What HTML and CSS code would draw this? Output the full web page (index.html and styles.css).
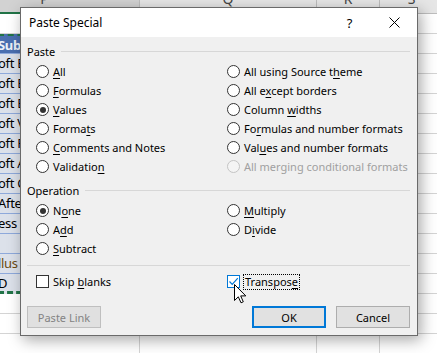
FILE: index.html
```html
<!DOCTYPE html>
<html lang="en">
<head>
  <meta charset="UTF-8" />
  <title>Paste Special</title>
  <link rel="stylesheet" href="styles.css">
</head>
<body>
  <div class="sheet">
    <div class="row head">
      <div class="cell active"><span>P</span></div>
      <div class="cell"><span>Q</span></div>
      <div class="cell"><span>R</span></div>
      <div class="cell"><span>S</span></div>
    </div>
    <div class="row"><div class="cell"></div><div class="cell"></div><div class="cell"></div><div class="cell"></div></div>
    <div class="row"><div class="cell data title-cell first">Sub</div><div class="cell"></div><div class="cell"></div><div class="cell"></div></div>
    <div class="row"><div class="cell data">oft E</div><div class="cell"></div><div class="cell"></div><div class="cell"></div></div>
    <div class="row"><div class="cell data">oft E</div><div class="cell"></div><div class="cell"></div><div class="cell"></div></div>
    <div class="row"><div class="cell data">oft E</div><div class="cell"></div><div class="cell"></div><div class="cell"></div></div>
    <div class="row"><div class="cell data">oft V</div><div class="cell"></div><div class="cell"></div><div class="cell"></div></div>
    <div class="row"><div class="cell data">oft P</div><div class="cell"></div><div class="cell"></div><div class="cell"></div></div>
    <div class="row"><div class="cell data">oft A</div><div class="cell"></div><div class="cell"></div><div class="cell"></div></div>
    <div class="row"><div class="cell data">oft C</div><div class="cell"></div><div class="cell"></div><div class="cell"></div></div>
    <div class="row"><div class="cell data">After</div><div class="cell"></div><div class="cell"></div><div class="cell"></div></div>
    <div class="row"><div class="cell data">ess</div><div class="cell"></div><div class="cell"></div><div class="cell"></div></div>
    <div class="row"><div class="cell data"></div><div class="cell"></div><div class="cell"></div><div class="cell"></div></div>
    <div class="row"><div class="cell data accent">llus</div><div class="cell"></div><div class="cell"></div><div class="cell"></div></div>
    <div class="row"><div class="cell data last">D</div><div class="cell"></div><div class="cell"></div><div class="cell"></div></div>
    <div class="row"><div class="cell"></div><div class="cell"></div><div class="cell"></div><div class="cell"></div></div>
    <div class="row"><div class="cell"></div><div class="cell"></div><div class="cell"></div><div class="cell"></div></div>
    <div class="row"><div class="cell"></div><div class="cell"></div><div class="cell"></div><div class="cell"></div></div>
  </div>

  <div class="dialog">
    <div class="titlebar">
      <span class="title">Paste Special</span>
      <span class="caption-btn">?</span>
      <span class="caption-btn">
        <svg width="11" height="11" viewBox="0 0 11 11"><path d="M0.5 0.5 L10.5 10.5 M10.5 0.5 L0.5 10.5" stroke="#000" stroke-width="1" fill="none"/></svg>
      </span>
    </div>

    <div class="body">
      <div class="group-head"><span>Paste</span></div>
      <div class="options">
        <label class="opt"><span class="radio"></span><span><u>A</u>ll</span></label>
        <label class="opt"><span class="radio"></span><span>All using Source t<u>h</u>eme</span></label>
        <label class="opt"><span class="radio"></span><span><u>F</u>ormulas</span></label>
        <label class="opt"><span class="radio"></span><span>All e<u>x</u>cept borders</span></label>
        <label class="opt"><span class="radio on"></span><span><u>V</u>alues</span></label>
        <label class="opt"><span class="radio"></span><span>Column <u>w</u>idths</span></label>
        <label class="opt"><span class="radio"></span><span>Forma<u>t</u>s</span></label>
        <label class="opt"><span class="radio"></span><span>Fo<u>r</u>mulas and number formats</span></label>
        <label class="opt"><span class="radio"></span><span><u>C</u>omments and Notes</span></label>
        <label class="opt"><span class="radio"></span><span>Val<u>u</u>es and number formats</span></label>
        <label class="opt"><span class="radio"></span><span>Validatio<u>n</u></span></label>
        <label class="opt disabled"><span class="radio"></span><span>All merging conditional formats</span></label>
      </div>

      <div class="group-head op"><span>Operation</span></div>
      <div class="options">
        <label class="opt"><span class="radio on"></span><span>N<u>o</u>ne</span></label>
        <label class="opt"><span class="radio"></span><span><u>M</u>ultiply</span></label>
        <label class="opt"><span class="radio"></span><span>A<u>d</u>d</span></label>
        <label class="opt"><span class="radio"></span><span>D<u>i</u>vide</span></label>
        <label class="opt"><span class="radio"></span><span><u>S</u>ubtract</span></label>
      </div>

      <div class="sep"></div>

      <div class="options checks">
        <label class="opt"><span class="check"></span><span>Skip <u>b</u>lanks</span></label>
        <label class="opt"><span class="check on">
          <svg width="11" height="11" viewBox="0 0 11 11"><path d="M1.5 5.5 L4.2 8.3 L9.8 2.2" stroke="#0078d7" stroke-width="1.2" fill="none"/></svg>
        </span><span class="focus">Transpos<u>e</u></span></label>
      </div>

      <div class="buttons">
        <button class="btn" disabled>Paste Link</button>
        <span class="spacer"></span>
        <button class="btn default">OK</button>
        <button class="btn">Cancel</button>
      </div>
    </div>
  </div>

  <svg class="cursor" width="13" height="20" viewBox="0 0 13 20">
    <path d="M0.5 0.5 L0.5 16.5 L4.3 12.8 L7 18.8 L9.3 17.8 L6.7 11.9 L11.8 11.9 Z" fill="#fff" stroke="#000" stroke-width="1"/>
  </svg>
</body>
</html>
```

FILE: styles.css
```css
body {
  margin: 0;
  width: 437px;
  height: 353px;
  overflow: hidden;
  position: relative;
  background: #fff;
  font-family: "Noto Sans", sans-serif;
}

/* spreadsheet behind the dialog */
.sheet {
  width: 444px;
}
.row {
  display: grid;
  grid-template-columns: 140px 177px 63px 64px;
  height: 20px;
}
.cell {
  border-right: 1px solid #d4d4d4;
  border-bottom: 1px solid #d4d4d4;
  overflow: hidden;
  white-space: nowrap;
  font-family: "Noto Sans", sans-serif;
  font-size: 13px;
  line-height: 19px;
  color: #000;
}
.head {
  height: 14px;
  background: #e6e6e6;
}
.head .cell {
  border-right: 1px solid #bdbdbd;
  border-bottom: 1px solid #bdbdbd;
  text-align: center;
  color: #444;
  font-size: 14px;
  line-height: 14px;
}
.head .cell span {
  display: block;
  margin-top: -8px;
}
.head .active {
  padding-right: 50px;
  background: #d2d2d2;
  border-bottom: 2px solid #217346;
}
.data {
  background: #dce1ea;
  border-bottom: 1px solid #8ea9db;
  border-right: none;
  margin-left: -2px;
  letter-spacing: -0.3px;
}
.title-cell {
  background: #4a6fb0;
  color: #eef2f8;
  font-weight: bold;
}
.accent {
  color: #6b4a10;
}
.first {
  border-top: 2px dashed #217346;
}
.last {
  border-bottom: 3px dashed #217346;
}

/* dialog window */
.dialog {
  position: absolute;
  left: 20px;
  top: 7px;
  width: 396px;
  height: 327px;
  border: 1px solid #6a6a6a;
  background: #f0f0f0;
  box-shadow: 3px 4px 14px rgba(0,0,0,0.35);
  font-size: 11px;
  color: #000;
  display: flex;
  flex-direction: column;
}
.titlebar {
  display: flex;
  align-items: center;
  height: 29px;
  background: #fff;
  padding-left: 8px;
}
.title {
  flex: 1;
  font-size: 12px;
}
.caption-btn {
  width: 45px;
  display: flex;
  justify-content: center;
  align-items: center;
  font-size: 13px;
}
.body {
  padding: 6px 7px 0 6px;
}
.group-head {
  display: flex;
  align-items: center;
  height: 16px;
}
.group-head::after {
  content: "";
  flex: 1;
  border-top: 1px solid #d7d7d7;
  margin-left: 6px;
}
.group-head.op {
  margin-top: 6px;
}
.options {
  display: grid;
  grid-template-columns: 191px 1fr;
  grid-auto-rows: 19px;
  padding-left: 9px;
  margin-top: 3px;
}
.opt {
  display: flex;
  align-items: center;
  gap: 4px;
  white-space: nowrap;
}
.opt u {
  text-decoration-thickness: 1px;
  text-underline-offset: 2px;
}
.radio {
  width: 11px;
  height: 11px;
  border: 1px solid #333;
  border-radius: 50%;
  background: #fff;
  display: flex;
  justify-content: center;
  align-items: center;
  flex: none;
}
.radio.on::after {
  content: "";
  width: 6px;
  height: 6px;
  border-radius: 50%;
  background: #333;
}
.disabled {
  color: #a0a0a0;
}
.disabled .radio {
  border-color: #c4c4c4;
  background: #f4f4f4;
}
.sep {
  border-top: 1px solid #d7d7d7;
  margin-top: 7px;
}
.checks {
  margin-top: 6px;
}
.check {
  width: 11px;
  height: 11px;
  border: 1px solid #333;
  background: #fff;
  flex: none;
  display: flex;
  justify-content: center;
  align-items: center;
}
.check.on {
  border-color: #0078d7;
}
.focus {
  outline: 1px dotted #000;
  outline-offset: 0;
  padding: 0 1px;
  line-height: 14px;
}
.buttons {
  display: flex;
  gap: 10px;
  margin-top: 15px;
}
.spacer {
  flex: 1;
}
.btn {
  width: 74px;
  height: 22px;
  border: 1px solid #adadad;
  background: #e1e1e1;
  font-family: "Noto Sans", sans-serif;
  font-size: 11px;
  color: #000;
  padding: 0;
}
.btn:disabled {
  color: #838383;
  border-color: #bfbfbf;
  background: #e0e0e0;
}
.btn.default {
  border: 2px solid #0078d7;
}

.cursor {
  position: absolute;
  left: 234px;
  top: 284px;
}
```
